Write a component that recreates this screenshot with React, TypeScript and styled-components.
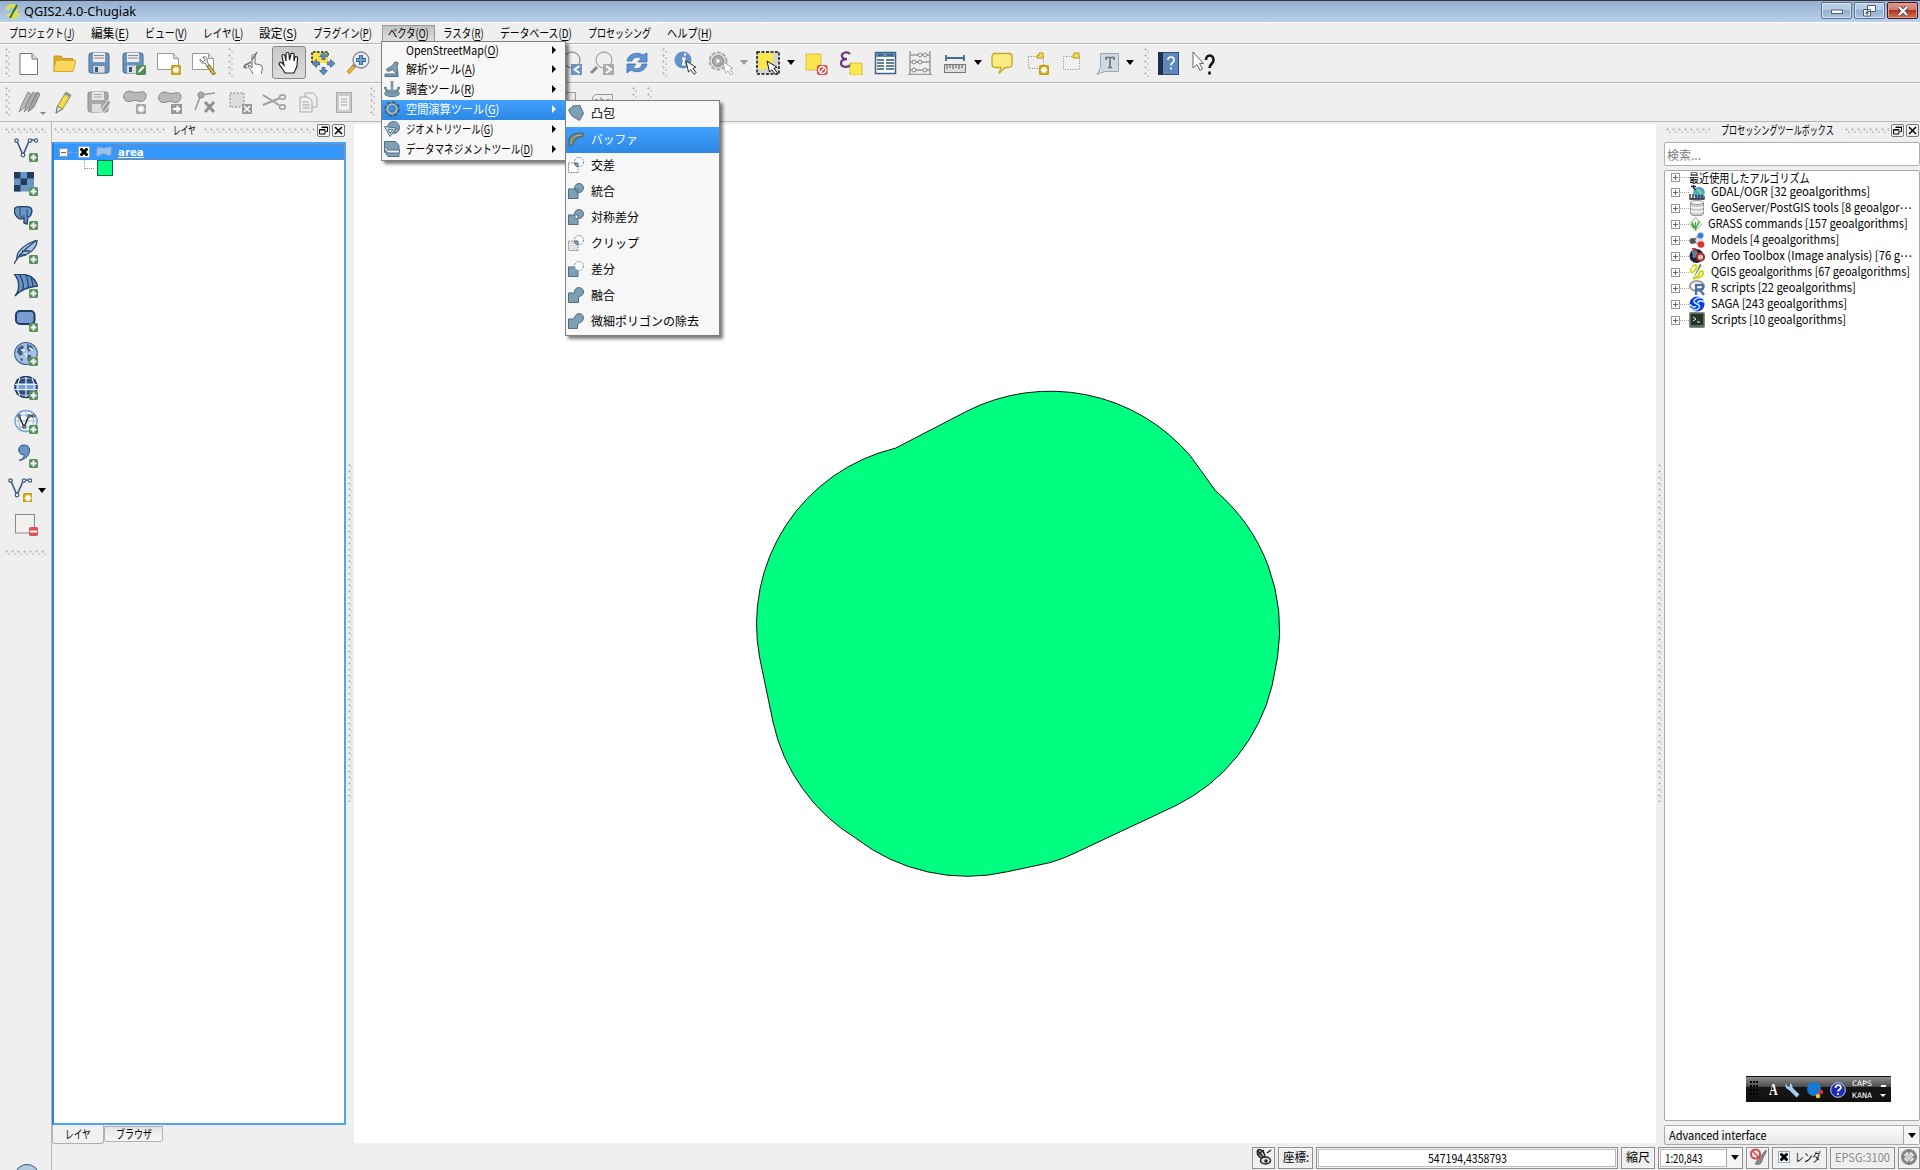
import React, { useLayoutEffect, useRef, useState } from 'react';
import styled, { createGlobalStyle, css } from 'styled-components';

const Global = createGlobalStyle`
  *, *::before, *::after { box-sizing: border-box; }
  body { margin: 0; background: #efefef; overflow: hidden; }
  svg { display: block; flex: none; }
  u { text-underline-offset: 2px; }
`;

const gothic = `"Noto Sans CJK JP", "Noto Sans", sans-serif`;

/* ---------- text fitted to the narrow UI font's advance ---------- */
const FitBox = styled.span<{ $w: number }>`
  display: inline-block;
  flex: none;
  width: ${p => p.$w}px;
  white-space: nowrap;
`;
const FitInner = styled.span`
  display: inline-block;
  transform-origin: 0 50%;
`;
function Fit({ w, children }: { w: number; children: React.ReactNode }) {
  const ref = useRef<HTMLSpanElement>(null);
  const [scale, setScale] = useState(1);
  useLayoutEffect(() => {
    if (ref.current) setScale(w / ref.current.offsetWidth);
  }, [w]);
  return (
    <FitBox $w={w}>
      <FitInner ref={ref} style={{ transform: `scaleX(${scale})` }}>{children}</FitInner>
    </FitBox>
  );
}
const Accel = ({ text, k }: { text: string; k?: string }) => (
  <>{text}{k && <>(<u>{k}</u>)</>}</>
);

/* ---------- icons ---------- */
const Svg = ({ s = 24, children }: { s?: number; children: React.ReactNode }) => (
  <svg width={s} height={s} viewBox={`0 0 ${s} ${s}`} fill="none">{children}</svg>
);
const Plus = () => (
  <g><rect x="15" y="15" width="9" height="9" rx="1.500" fill="#5a9158" /><path d="M19.500 16.500v6M16.500 19.500h6" stroke="#fff" strokeWidth="2" /></g>
);
const Star = ({ x = 14, y = 14, c = '#c9a00c' }: { x?: number; y?: number; c?: string }) => (
  <g transform={`translate(${x} ${y})`}><rect width="10" height="10" rx="1.500" fill={c} /><path d="M5 1.500v7M1.500 5h7M2.500 2.500l5 5M7.500 2.500l-5 5" stroke="#fff" strokeWidth="1.300" /></g>
);
const Cursor = ({ x, y, c = '#333' }: { x: number; y: number; c?: string }) => (
  <path transform={`translate(${x} ${y})`} d="M0 0l2.500 11 2.300-2.200 3.400 4.400 2-1.500-3.300-4.300 3-1.200z" fill="#fff" stroke={c} strokeWidth="1" />
);

const icons: Record<string, React.ReactNode> = {
  file: <Svg><path d="M3 2.500h12l5.500 5.500v15.500H3z" fill="#fff" stroke="#777" /><path d="M15 2.500v5.500h5.500" fill="#ddd" stroke="#777" /></Svg>,
  folder: <Svg><path d="M2 20V5h7l2 2.500h10V10" fill="#d9a92f" stroke="#c89a2a" /><path d="M1.500 20.500L4 9.500h20l-3 11z" fill="#fbd75f" stroke="#d9a92f" /></Svg>,
  save: <Svg><rect x="2" y="2" width="20" height="20" rx="2" fill="#6a93c3" stroke="#44678f" /><path d="M6 2h12v9H6z" fill="#eee" /><path d="M7 4.500h10M7 7h10" stroke="#888" /><path d="M6 14.500h12V22H6z" fill="#ddd" stroke="#44678f" strokeWidth=".6" /><rect x="8" y="16" width="3" height="5" fill="#35557c" /></Svg>,
  saveas: <Svg><rect x="1" y="2" width="20" height="20" rx="2" fill="#6a93c3" stroke="#44678f" /><path d="M5 2h12v9H5z" fill="#eee" /><path d="M6 4.500h10M6 7h10" stroke="#888" /><path d="M5 14.500h11V22H5z" fill="#ddd" /><rect x="7" y="16" width="3" height="5" fill="#35557c" /><rect x="14" y="14" width="10" height="10" rx="1.500" fill="#4f8e50" /><path d="M16 22l1-3 4-4 1.500 1.500-4 4z" fill="#fff" /></Svg>,
  composer: <Svg><path d="M.5 2.500h16l5 5V18.500H.5z" fill="#fff" stroke="#999" /><path d="M16.500 2.500v5h5" fill="#ddd" stroke="#999" /><Star /></Svg>,
  manager: <Svg><path d="M.5 2.500h16l5 5V18.500H.5z" fill="#fff" stroke="#999" /><path d="M16.500 2.500v5h5" fill="#ddd" stroke="#999" /><path d="M8 8c0 4 3 5 5 4l3 5 2-1-3-6c1-3-1-5-4-4l2 3-2 2z" fill="#ececec" stroke="#777" /><path d="M15 15.500l2.500-1.500 6 8.500-2.500 1.500z" fill="#d7b952" stroke="#7b6428" /></Svg>,
  touch: <Svg><path d="M11 23c-1-3-4-6-5-8 1-1 3 0 4 2V5c0-2 3-2 3 0v8c3 0 6 1 7 2 1 2 0 5-1 8" fill="#fff" stroke="#666" /><path d="M2 15l7-4M10 9l5-8M4 13l-2 3 3 1" stroke="#777" strokeWidth="1.500" /></Svg>,
  hand: <Svg><path d="M8 22c-2-4-5-7-6-9 0-2 2-2 3-1l2 2-2-9c0-2 2-2 3 0l1 5V3c0-2 3-2 3 0l.5 6L14 3c0-1 3-1 3 0v7l1-4c1-1 3 0 2.500 1.500L20 15c-1 3-2 4-3 7z" fill="#fff" stroke="#222" strokeWidth="1.200" /></Svg>,
  pansel: <Svg><path d="M1 1h16v11H1z" fill="#f7e04a" /><path d="M1 12V1h16v5" stroke="#222" strokeWidth="1.500" strokeDasharray="2.500 1.500" /><path d="M12.500 1l4 4.500h-2.500v3h-3v-3H8.500zM12.500 24l4-4.500h-2.500v-3h-3v3H8.500zM1 12.500l4.500-4v2.500h3v3h-3v2.500zM24 12.500l-4.500-4v2.500h-3v3h3v2.500z" fill="#5a8dc6" stroke="#2f5687" strokeWidth=".7" /></Svg>,
  zoomin: <Svg><path d="M2 22l7-8" stroke="#777" strokeWidth="4" /><path d="M2 22l6-6.500" stroke="#f3b61f" strokeWidth="3" /><circle cx="15" cy="9" r="8" fill="#e8eef5" stroke="#888" strokeWidth="1.300" /><path d="M15 4v10M10 9h10" stroke="#35629a" strokeWidth="4" /><path d="M15 4.500v9M10.500 9h9" stroke="#6f9fd3" strokeWidth="2" /></Svg>,
  zoomlast: <Svg><circle cx="12" cy="9" r="8" fill="#eee" stroke="#999" strokeWidth="1.300" /><rect x="11" y="13" width="11" height="11" fill="#6a93c3" /><path d="M19.500 15l-5 3.500 5 3.500" stroke="#fff" strokeWidth="2" /></Svg>,
  zoomnext: <Svg><path d="M1 22l6-6" stroke="#888" strokeWidth="3" /><circle cx="14" cy="9" r="8" fill="#eee" stroke="#aaa" strokeWidth="1.300" /><rect x="13" y="13" width="11" height="11" fill="#aaa" /><path d="M16 15l5 3.500-5 3.500" stroke="#fff" strokeWidth="2" /></Svg>,
  refresh: <Svg><path d="M2 10C3 3 12 0 18 4l4-2v9h-9l3-3.500C13 5 8 6 7 10zM22 13c-1 7-10 10-16 6l-4 3v-9h9l-3 3.500c3 2.500 8 1.500 9-3.500z" fill="#5f93d0" stroke="#2f65a5" strokeWidth=".7" /></Svg>,
  identify: <Svg><circle cx="9" cy="9" r="8.500" fill="#6491c6" /><path d="M10 3.500h2M8 7.500h2.500L9 13.500h2.500" stroke="#fff" strokeWidth="2" /><Cursor x={12} y={10} /></Svg>,
  action: <Svg><circle cx="9" cy="10" r="8.500" fill="#ddd" stroke="#aaa" strokeWidth="2" strokeDasharray="4 1.500" /><circle cx="9" cy="10" r="5.500" fill="#aaa" stroke="#888" /><path d="M7.500 7.500l4 2.500-4 2.500z" fill="#fff" /><Cursor x={14} y={11} c="#aaa" /></Svg>,
  select: <Svg><path d="M1 1h22v22H1z" fill="#d4d4d4" stroke="#111" strokeWidth="1.500" strokeDasharray="3 1.500" /><path d="M2 2h15v16H2z" fill="#fbe650" /><Cursor x={11} y={10} c="#111" /></Svg>,
  deselect: <Svg><rect x="2" y="3" width="15" height="16" fill="#fbe650" stroke="#c4a40d" strokeDasharray="1.500 1" /><rect x="13" y="14" width="10.500" height="10" rx="2" fill="#dc4141" /><circle cx="18.300" cy="19" r="3.500" stroke="#fff" strokeWidth="1.500" /><path d="M16.200 21.500l4.500-5" stroke="#fff" strokeWidth="1.300" /></Svg>,
  epsilon: <Svg><path d="M11 3C8 0 2 2 3 5c0 2 2 3 5 3-4 0-6 2-6 4 0 5 8 5 10 1" stroke="#6d3b7a" strokeWidth="2.300" /><rect x="11" y="12" width="12" height="12" fill="#fbe650" stroke="#c4a40d" strokeDasharray="1.500 1" /></Svg>,
  table: <Svg><rect x="2.500" y="1.500" width="20" height="21" fill="#fff" stroke="#3c6285" strokeWidth="1.500" /><path d="M3 2h19v4H3z" fill="#5f8cb5" /><path d="M4 9h7M4 12h7M4 15h7M4 18h7M13 9h8M13 12h8M13 15h8M13 18h8M5 4h5M14 4h6" stroke="#315778" strokeWidth="1.300" /></Svg>,
  abacus: <Svg><path d="M2 0v23M22 0v23M2 4h20M2 11h20M2 19h20M0 23.500h24" stroke="#999" strokeWidth="1.400" /><g fill="#eee" stroke="#888"><circle cx="12" cy="4" r="2" /><circle cx="17" cy="4" r="2" /><circle cx="6" cy="11" r="2" /><circle cx="12" cy="11" r="2" /><circle cx="6" cy="19" r="2" /><circle cx="17" cy="19" r="2" /></g></Svg>,
  ruler: <Svg><path d="M3 7h18M3 4v6M21 4v6" stroke="#3f6b96" strokeWidth="1.800" /><rect x="1.500" y="13.500" width="21" height="8" fill="#ddd" stroke="#777" /><path d="M4 14v4M7 14v3M10 14v4M13 14v3M16 14v4M19 14v3" stroke="#555" /></Svg>,
  bubble: <Svg><path d="M5 2.500h14c3 0 3 2 3 3v7c0 3-1 4-4 4h-3l-6 6 2-6H6c-3 0-4-1-4-4V6c0-2 1-3.500 3-3.500z" fill="#fcec86" stroke="#c9a61e" strokeWidth="1.300" /></Svg>,
  newmark: <Svg><path d="M1.500 5.500h15v12h-15z" stroke="#888" strokeDasharray="1 1.500" /><path d="M12 2h4v5h-6V4.500h2z" fill="#f9e152" stroke="#b8960c" /><Star x={12} y={14} /></Svg>,
  showmark: <Svg><path d="M3.500 5.500h16v13h-16z" stroke="#888" strokeDasharray="1 1.500" fill="#f1f1f1" /><path d="M14 2h5v5h-6V4.500h1z" fill="#f9e152" stroke="#b8960c" /></Svg>,
  annot: <Svg><path d="M4.500 2.500h18v18H9l-8 3 3.500-7z" fill="#cfdbe4" stroke="#9ba8b0" /><path d="M10 9V6.500h8V9M14 7v9M12 16.500h4" stroke="#6c7378" strokeWidth="1.600" /></Svg>,
  help: <Svg><rect x="2.500" y="1.500" width="20" height="22" fill="#5f89bd" stroke="#2e4f7b" /><rect x="2" y="1" width="5" height="23" fill="#1f3048" /><path d="M12 9c0-4 6-4 6 0 0 3-3 2.500-3 5.500M15 16.500v2" stroke="#fff" strokeWidth="1.700" /></Svg>,
  whats: <Svg><path d="M1 1v16l4-3.500 3 6 2.500-1.500-3-5.500h4z" fill="#fff" stroke="#666" /><path d="M14 9c0-6 7.500-6 7.500 0 0 4-4 4-4 8M17.500 20.500v3" stroke="#111" strokeWidth="2.600" /></Svg>,
  pencils: <Svg><path d="M1 22l3-8L10 2l3 2-6 13z" fill="#bbb" stroke="#8c8c8c" /><path d="M6 22l3-8 6-12 3 2-6 13z" fill="#b0b0b0" stroke="#8c8c8c" /><path d="M10 22l3-8 6-12 3 2-6 13z" fill="#a4a4a4" stroke="#858585" /></Svg>,
  pencil: <Svg><path d="M5 23l1.500-7L15 2l5 3-8.500 14z" fill="#f0dc4c" stroke="#9c8c2a" /><path d="M5 23l1.500-7 5 3z" fill="#ddd" stroke="#777" /><path d="M15 2l5 3-1.500 2.500-5-3z" fill="#999" /></Svg>,
  saveedit: <Svg><rect x="1" y="2" width="20" height="20" rx="2" fill="#a8a8a8" stroke="#8c8c8c" /><path d="M5 2h12v8H5z" fill="#e6e6e6" /><path d="M7 4.500h8M7 7h8" stroke="#aaa" /><path d="M5 14h9v8H5z" fill="#ddd" /><path d="M14 23l1-4 6-9 3 2-6 9z" fill="#999" stroke="#eee" /></Svg>,
  addfeat: <Svg><path d="M2.500 2.500C7-1 10 3 14 2.500c5-1 9-1.500 9 3 0 5-4 7-8 5.500-4-2-8 2-12 0-3-2-3-6-.5-8.500z" fill="#b8b8b8" stroke="#888" /><Star x={13} y={14} c="#a5a5a5" /></Svg>,
  movefeat: <Svg><path d="M2.500 3.500C7 0 10 4 14 3.500c5-1 9-1.500 9 3 0 5-4 7-8 5.500-4-2-8 2-12 0-3-2-3-6-.5-8.500z" fill="#b8b8b8" stroke="#888" /><rect x="13" y="14" width="11" height="10" fill="#999" /><path d="M15 19h6M18.500 16l3 3-3 3" stroke="#fff" strokeWidth="1.800" /></Svg>,
  node: <Svg><path d="M2 20L8 5l14-2" stroke="#999" strokeWidth="1.500" /><circle cx="8" cy="5" r="3" fill="#aaa" stroke="#888" /><path d="M12 22l9-10M12 12l9 10" stroke="#909090" strokeWidth="3" /></Svg>,
  delsel: <Svg><rect x="2" y="3" width="14" height="14" fill="#ddd" stroke="#888" strokeDasharray="2 1.500" /><rect x="14" y="14" width="10" height="10" fill="#999" /><path d="M16 16l6 6M22 16l-6 6" stroke="#fff" strokeWidth="1.600" /></Svg>,
  cut: <Svg><path d="M1 5l16 10M1 15l17-7" stroke="#a0a0a0" strokeWidth="2" /><ellipse cx="20.500" cy="7" rx="3" ry="2.300" stroke="#999" strokeWidth="1.500" /><ellipse cx="20.500" cy="17" rx="3" ry="2.300" stroke="#999" strokeWidth="1.500" /></Svg>,
  copy: <Svg><path d="M9 3h8l4 4v10H9z" fill="#eee" stroke="#aaa" /><path d="M4 7h8l4 4v11H4z" fill="#eee" stroke="#aaa" /><path d="M6.500 12h6M6.500 15h7M6.500 18h7" stroke="#bbb" strokeWidth="1.500" /></Svg>,
  paste: <Svg><rect x="4.500" y="2.500" width="15" height="20" fill="#ccc" stroke="#aaa" /><path d="M7 6h10v14H7z" fill="#f2f2f2" /><path d="M9 9h6M9 12h6M9 15h6M8 3h8" stroke="#bbb" strokeWidth="1.500" /></Svg>,
  label: <Svg><path d="M2.500 6.500l4-4h15v14h-19z" fill="#e8e8e8" stroke="#999" /></Svg>,
  vector: <Svg><path d="M2.500 2L9 17 15.500 2H22" stroke="#466084" strokeWidth="1.700" /><g fill="#fff" stroke="#466084" strokeWidth="1.300"><circle cx="2.500" cy="2.500" r="1.700" /><circle cx="9" cy="17" r="1.800" /><circle cx="16" cy="2.500" r="1.700" /><circle cx="22" cy="2.500" r="1.700" /></g><Plus /></Svg>,
  raster: <Svg><path d="M0 0h20v19.500H0z" fill="#6b95c7" /><path d="M0 0h6.500v6.500H0zM13 0h7v6.500h-7zM6.500 6.500H13V13H6.500zM0 13h6.500v6.500H0z" fill="#223c5e" /><Plus /></Svg>,
  elephant: <Svg><path d="M1 2c3-2 13-2 16 0 2 3 0 9-3 9l-1 7-3-1V12c-3 2-6 0-7-1C1 9-.5 5 1 2z" fill="#6b95c7" stroke="#24456e" strokeWidth="1.400" /><path d="M6 2v8c1 2 4 1 4-1M13 3v8" stroke="#24456e" /><Plus /></Svg>,
  feather: <Svg><path d="M3 20C1 9 15 3 23 0c0 8-7 14-18 17" fill="#a9c4e2" stroke="#2b4b73" strokeWidth="1.200" /><path d="M0 24C4 15 12 8 23 0M5 15l7 0M8 11l8 0" stroke="#2b4b73" strokeWidth="1.300" /><Plus /></Svg>,
  wing: <Svg><path d="M0 0c10 0 20 0 23.500 12C14 13 6 16 1 22 6 16 6 6 0 0z" fill="#6b95c7" stroke="#24456e" strokeWidth="1.400" /><path d="M6 1c3 6 4 10 3 15M12 1c2 6 3 9 2 13M17 4c2 4 2 6 2 9" stroke="#24456e" strokeWidth="1.300" /><Plus /></Svg>,
  oracle: <Svg><rect x="2" y="3" width="18.500" height="13" rx="4" fill="#7a9cd0" stroke="#213c62" strokeWidth="2" /><Plus /></Svg>,
  globe: <Svg><ellipse cx="12" cy="11.500" rx="11.300" ry="11" fill="#a5c1e2" stroke="#45699a" strokeWidth="1.200" /><path d="M4 6l4-3 2 2-2 4 1 3-3 2-3-4zM13 2l5 2 2 4-3 0-2 2-2-3zM13 13l4 0 0 4-3 3zM6 16l3 1-1 3z" fill="#3d608c" /><path d="M7 8l4 0M15 6l4 2M11 11l2 4" stroke="#eef4fa" strokeWidth="1.500" /><Plus /></Svg>,
  globe2: <Svg><ellipse cx="12" cy="11" rx="11" ry="10.500" fill="#7da3d3" stroke="#1f3b61" strokeWidth="1.500" /><path d="M2.500 5h19M2.500 16.500h19" stroke="#1f3b61" strokeWidth="4" opacity=".8" /><path d="M12 1v20M1 8.500h22M1 13.500h22M6 2c-3 6-3 12 0 18M18 2c3 6 3 12 0 18" stroke="#e5edf6" strokeWidth="1.200" /><Plus /></Svg>,
  globev: <Svg><ellipse cx="12" cy="11" rx="11" ry="10.500" fill="#f5f9ff" stroke="#7ba1d3" strokeWidth="1.500" /><path d="M1 11h22M12 1v20M3 5h18M3 17h18M7 2c-3 6-3 12 0 18M17 2c3 6 3 12 0 18" stroke="#9bbbe0" /><path d="M5 6l5 11 5-11h5" stroke="#222" strokeWidth="1.400" /><g fill="#fff" stroke="#222"><circle cx="5" cy="6" r="1.300" /><circle cx="10" cy="17" r="1.300" /><circle cx="15" cy="6" r="1.300" /><circle cx="19.500" cy="6" r="1.300" /></g><Plus /></Svg>,
  comma: <Svg><path d="M5 16.500c4-1.500 5.500-4 5-6-6 1.500-8-9.500 0-9.500 9 0 7 14-5 15.500z" fill="#6b95c7" stroke="#2b4f80" /><Plus /></Svg>,
  newvec: <Svg><path d="M2.500 2L9 17 15.500 2H22" stroke="#466084" strokeWidth="1.700" /><g fill="#fff" stroke="#466084" strokeWidth="1.300"><circle cx="2.500" cy="2.500" r="1.700" /><circle cx="9" cy="17" r="1.800" /><circle cx="16" cy="2.500" r="1.700" /><circle cx="22" cy="2.500" r="1.700" /></g><Star x={15} y={15} /></Svg>,
  remove: <Svg><rect x="1.500" y="2.500" width="19" height="18.500" fill="#f1f1ef" stroke="#8a8a86" /><rect x="15" y="15" width="9" height="9" rx="1.500" fill="#e25258" /><path d="M16 19.500h7" stroke="#fff" strokeWidth="2" /></Svg>,
};

const B = '#7f9fb3', BD = '#4f6f86';
const lens = 'M6.500 6H10v3.800C7.500 9.500 6.500 8 6.500 6z';
const menuIcons: Record<string, React.ReactNode> = {
  scope: <Svg s={16}><path d="M1 13h13v2.500H1zM2 8.500l6-3.500 3-4 3 .5-1 5 1 6-3-1-2-3-5 2z" fill={B} stroke={BD} /></Svg>,
  survey: <Svg s={16}><ellipse cx="8" cy="12.500" rx="7.500" ry="3" fill={B} stroke={BD} /><path d="M8 0v10M1 6c1 4 4 5 7 5s6-1 7-5" stroke={BD} strokeWidth="2.500" /><path d="M8 0v10M2 7c1 3 3 4 6 4s5-1 6-4" stroke="#a9bfce" strokeWidth="1" /></Svg>,
  gear: <Svg s={16}><circle cx="8" cy="8" r="6.700" stroke="#44627a" strokeWidth="2.500" strokeDasharray="3.200 2.060" /><circle cx="8" cy="8" r="4.600" stroke="#44627a" strokeWidth="4" /><circle cx="8" cy="8" r="4.600" stroke="#9db6c8" strokeWidth="2.400" /></Svg>,
  geom: <Svg s={16}><circle cx="9.500" cy="6.500" r="6" fill={B} stroke={BD} /><path d="M.5 5.500L12 7l-6 8.500z" fill="#e4ecf1" stroke={BD} /><path d="M4 8l5 .5-3 4z" stroke={BD} /></Svg>,
  data: <Svg s={16}><path d="M.5.500h11l3.500 4v11H4L.5 11z" fill={B} stroke={BD} /><path d="M.5 5L4 9h11.500v3H4L.5 8z" fill="#edf2f5" stroke={BD} /></Svg>,
  hull: <Svg s={16}><path d="M.5 5L5 1l7-.5 3.500 8-4 7L4 11z" fill={B} stroke={BD} /></Svg>,
  buffer: <Svg s={16}><path d="M1 14C0 5 4 2 14 2c2 0 2 3 0 4-5 0-8 3-9 8-1 1-4 2-4 0z" fill="#6f8478" stroke="#425f66" /><path d="M3 13c0-6 3-9 11-9" stroke="#b6b58d" /></Svg>,
  intersect: <Svg s={16}><rect x=".5" y="6" width="9.500" height="9.500" fill="#fff" stroke="#777" strokeDasharray="1.500 1" /><circle cx="11" cy="5" r="4.500" fill="#fff" stroke="#6f8c9c" strokeDasharray="2 1" /><path d={lens} fill={B} stroke={BD} /></Svg>,
  union: <Svg s={16}><rect x=".5" y="6" width="9.500" height="9.500" fill={B} stroke={BD} /><circle cx="11" cy="5" r="4.500" fill={B} stroke={BD} /><path d="M6.500 6H10v3.800" stroke={BD} /></Svg>,
  sym: <Svg s={16}><rect x=".5" y="6" width="9.500" height="9.500" fill={B} stroke={BD} /><circle cx="11" cy="5" r="4.500" fill={B} stroke={BD} /><path d={lens} fill="#fff" stroke={BD} /></Svg>,
  clip: <Svg s={16}><rect x=".5" y="6" width="9.500" height="9.500" fill="#e2e2e2" stroke="#888" strokeDasharray="1.500 1" /><circle cx="11" cy="5" r="4.500" fill="#fff" stroke="#6f8c9c" strokeDasharray="2 1" /><path d={lens} fill={B} stroke={BD} /></Svg>,
  diff: <Svg s={16}><rect x=".5" y="6" width="9.500" height="9.500" fill={B} stroke={BD} /><circle cx="11" cy="5" r="4.500" fill="#fff" stroke="#6f8c9c" strokeDasharray="2 1" /></Svg>,
  dissolve: <Svg s={16}><path d="M.5 6h6c-1-7 9-7 9-1 0 3-3 4.500-5 4.500v6H.5z" fill={B} stroke={BD} /></Svg>,
  sliver: <Svg s={16}><path d="M.5 6h4l2.500-2c1-5 8.500-4.500 8.500 1 0 3-3 5-5 5l-1 3v2.500H.5z" fill={B} stroke={BD} /></Svg>,
};

const treeIcons: Record<string, React.ReactNode> = {
  gdal: <Svg s={16}><circle cx="10" cy="8.500" r="5.800" fill="#4ba7c2" /><path d="M7 5l4 1 3 4-4-1z" fill="#8ed08e" /><path d="M2 2.500h5M4.500 1v3l2 2" stroke="#222" strokeWidth="1.300" /><path d="M1 10v5h14v-3M4 10v5M7 11v4M10 11v4M13 11v4" stroke="#223" strokeWidth="1.300" /></Svg>,
  db: <Svg s={16}><path d="M1.500 2.500v11c0 3 13 3 13 0v-11z" fill="#ccc" stroke="#888" /><ellipse cx="8" cy="2.500" rx="6.500" ry="2" fill="#f4f4f4" stroke="#999" /><path d="M1.500 6.500c1 2 12 2 13 0M1.500 10.500c1 2 12 2 13 0" stroke="#fff" strokeWidth="1.400" /></Svg>,
  grass: <Svg s={16}><path d="M6.500 1l6 7-6 7-6-7z" fill="#eef8ea" stroke="#a7b7a2" /><path d="M6.500 14V6M6.500 13L3 6M6.500 13l4-8M5 12L2.500 8" stroke="#49a545" strokeWidth="1.300" /></Svg>,
  models: <Svg s={16}><path d="M3 10l7-6M4 9l8 3" stroke="#555" strokeWidth="2" /><circle cx="3.500" cy="9" r="3" fill="#555" /><circle cx="10" cy="8" r="3.500" fill="#ddd" /><circle cx="11.500" cy="3.500" r="3" fill="#3a7ce8" /><circle cx="12" cy="12.500" r="3.300" fill="#e13232" /></Svg>,
  orfeo: <Svg s={16}><circle cx="7.500" cy="8" r="7" fill="#1d2438" /><path d="M3 3c3-2 5 0 6 2s-2 5-5 5z" fill="#6a7c9c" /><circle cx="11.500" cy="9" r="3.600" fill="#bcc" stroke="#c2211b" strokeWidth="2" /><path d="M3 0l5 2" stroke="#b33" strokeWidth="2" /></Svg>,
  qgis: <Svg s={16}><path d="M3 3C7-1 9 2 6 6S1 9 2 4M5 14c5 1 4-6 7-7s3 5-1 6-8 2-6 1z" stroke="#d4d320" strokeWidth="2" /><path d="M4 15L11 0l1.500 1z" fill="#327c28" /></Svg>,
  r: <Svg s={16}><ellipse cx="8" cy="6" rx="7" ry="5" stroke="#999" strokeWidth="2" /><path d="M7 15V5h5c3 0 3 4 0 4.500H8M11 10l4 5" stroke="#4c6fa8" strokeWidth="2.300" /></Svg>,
  saga: <Svg s={16}><circle cx="8" cy="8" r="7.500" fill="#1133e8" /><path d="M13 2C7 1 3 5 6 7s6 2 4 5-7 2-8 0M15 6c-4-2-8-1-5 1M1 8c1 3 5 4 6 2" stroke="#a9f0ff" strokeWidth="1.600" /></Svg>,
  script: <Svg s={16}><rect x=".5" y=".5" width="15" height="15" rx="1" fill="#666" stroke="#888" /><rect x="2" y="2" width="12" height="11" fill="#233524" /><path d="M4 5l3 2-3 2M8 10h3" stroke="#dfe" /></Svg>,
};

/* ---------- frame ---------- */
const Window = styled.div`
  position: relative;
  width: 1920px;
  height: 1170px;
  display: flex;
  flex-direction: column;
  overflow: hidden;
  background: #efefef;
  color: #000;
  font: 12px/16px ${gothic};
`;
const TitleBar = styled.header`
  flex: none;
  height: 22px;
  display: flex;
  align-items: flex-start;
  gap: 2px;
  padding: 1px 2px 0 5px;
  border-top: 1px solid #35353b;
  background: linear-gradient(#95b0d0, #b9d1ea);
  > svg { margin: 2px 2px 0 0; }
`;
const TitleText = styled.h1`
  margin: 1px 0 0;
  flex: 1;
  font: 400 12.5px/18px "Noto Sans", sans-serif;
`;
const WinButton = styled.button<{ $close?: boolean }>`
  flex: none;
  width: 31px;
  height: 17px;
  padding: 0;
  display: flex;
  align-items: center;
  justify-content: center;
  border: 1px solid ${p => (p.$close ? '#4a1520' : '#5b718e')};
  border-radius: 2px;
  box-shadow: inset 0 0 0 1px ${p => (p.$close ? '#e39c90' : '#d4e2f1')};
  background: ${p => p.$close
    ? 'linear-gradient(#dd9a8c, #cf7866 50%, #b2361f 50%, #cf7358)'
    : 'linear-gradient(#c0d3e8, #b0c8e2 50%, #93afcf 50%, #aac5e1)'};
`;
const MenuBar = styled.nav`
  flex: none;
  height: 22px;
  display: flex;
  align-items: center;
  padding-left: 1px;
  border-top: 1px solid #fff;
  border-bottom: 1px solid #b7b7b7;
`;
const MenuTitle = styled.div<{ $open?: boolean }>`
  height: 17px;
  padding: 0 8px 1px;
  display: flex;
  align-items: center;
  ${p => p.$open && css`
    padding: 0 5px 1px;
    margin: 0 0 0 2px;
    border: 1px solid #999;
    background: linear-gradient(#c2c2c2, #dedede);
  `}
`;
const ToolBar = styled.div`
  flex: none;
  height: 39px;
  display: flex;
  align-items: center;
  padding: 0 0 2px 5px;
  border-top: 1px solid #fafafa;
  border-bottom: 1px solid #b7b7b7;
`;
const Slot = styled.div<{ $w: number }>`
  flex: none;
  width: ${p => p.$w}px;
  display: flex;
  align-items: center;
  justify-content: center;
`;
const dots = css`
  background-image:
    radial-gradient(circle at 1.500px 1.500px, #c3c3c3 1px, transparent 1.400px),
    radial-gradient(circle at 4px 4px, #d0d0d0 1px, transparent 1.400px);
  background-size: 6px 6px;
`;
const Grip = styled.i`
  flex: none;
  width: 6px;
  height: 30px;
  ${dots}
`;
const HGrip = styled.i<{ $w?: number }>`
  height: 5px;
  ${p => (p.$w ? `width: ${p.$w}px; flex: none;` : 'flex: 1;')}
  ${dots}
`;
const Down = styled.i<{ $c?: string; $s?: number }>`
  flex: none;
  border: ${p => p.$s ?? 4}px solid transparent;
  border-top: ${p => (p.$s ?? 4) + (p.$s ? 0 : 1)}px solid ${p => p.$c ?? '#000'};
  border-bottom: 0;
`;
const Pressed = styled.div`
  flex: none;
  width: 34px;
  height: 33px;
  display: flex;
  align-items: center;
  justify-content: center;
  border: 1px solid #888;
  border-radius: 3px;
  background: linear-gradient(#c8c8c8, #dcdcdc);
`;
const Body = styled.main`
  flex: 1;
  min-height: 0;
  display: flex;
`;
const SideTools = styled.aside`
  width: 52px;
  flex: none;
  display: flex;
  flex-direction: column;
  align-items: center;
  padding-top: 6px;
  border-right: 1px solid #b7b7b7;
`;
const SideSlot = styled.div<{ $menu?: boolean }>`
  width: 100%;
  height: 34px;
  flex: none;
  display: flex;
  align-items: center;
  gap: 6px;
  padding-left: ${p => (p.$menu ? 8 : 14)}px;
`;
const SideEnd = styled.div`
  margin-top: 9px;
`;

/* ---------- docks ---------- */
const Dock = styled.section<{ $w: number }>`
  width: ${p => p.$w}px;
  flex: none;
  display: flex;
  flex-direction: column;
`;
const DockTitle = styled.div<{ $gap: number }>`
  height: 20px;
  flex: none;
  display: flex;
  align-items: center;
  padding: 0 1px 4px 2px;
  > span { margin: 0 ${p => p.$gap}px; }
`;
const DockButton = styled.button`
  flex: none;
  width: 13px;
  height: 13px;
  margin-left: 2px;
  padding: 0;
  display: flex;
  align-items: center;
  justify-content: center;
  background: #f3f3f3;
  border: 1px solid #777;
  border-radius: 2px;
`;
const DockButtons = () => (
  <>
    <DockButton><svg width="9" height="9" fill="none" stroke="#000"><path d="M3 2V1h5.500v4.500H7M3 1.500h5.500M.5 3.500h5.500v4.500H.5zM.5 4h5" /></svg></DockButton>
    <DockButton><svg width="9" height="9" stroke="#000" strokeWidth="1.500"><path d="M1 1l7 7M8 1l-7 7" /></svg></DockButton>
  </>
);
const LayerTree = styled.div`
  flex: 1;
  border: 2px solid #4ea3fb;
  border-left-color: #2a7fe0;
  background: #fff;
`;
const LayerRow = styled.div`
  height: 16px;
  display: flex;
  align-items: center;
  padding-left: 5px;
  background: #3498fe;
`;
const Expander = styled.i<{ $plus?: boolean }>`
  position: relative;
  flex: none;
  width: 9px;
  height: 9px;
  background: #fff;
  border: 1px solid #999;
  &::before { content: ''; position: absolute; left: 1px; top: 3px; width: 5px; height: 1px; background: #666; }
  ${p => p.$plus && css`&::after { content: ''; position: absolute; left: 3px; top: 1px; width: 1px; height: 5px; background: #666; }`}
`;
const Stub = styled.i<{ $w: number }>`
  flex: none;
  width: ${p => p.$w}px;
  border-top: 1px dotted #aaa;
`;
const Check = styled.i`
  flex: none;
  width: 12px;
  height: 12px;
  display: flex;
  align-items: center;
  justify-content: center;
  background: #fff;
  border: 1px solid #9ab;
`;
const CheckMark = () => <Check><svg width="8" height="8" stroke="#000" strokeWidth="3"><path d="M.5.500l7 7M7.500.500l-7 7" /></svg></Check>;
const LayerName = styled.span`
  flex: 1;
  height: 16px;
  padding-left: 2px;
  margin-left: 3px;
  border: 1px dotted #b47a4a;
  color: #fff;
  font: bold 11px/15px "DejaVu Sans", sans-serif;
  u { text-underline-offset: 1px; }
`;
const Legend = styled.div`
  display: flex;
  padding-left: 30px;
`;
const Elbow = styled.i`
  width: 10px;
  height: 9px;
  margin-right: 3px;
  border-left: 1px dotted #999;
  border-bottom: 1px dotted #999;
`;
const Swatch = styled.i`
  width: 16px;
  height: 16px;
  background: #00ff80;
  border: 1px solid #0a6b3c;
`;
const Tabs = styled.div`
  height: 45px;
  flex: none;
  display: flex;
  align-items: flex-start;
`;
const Tab = styled.div<{ $w: number; $on?: boolean }>`
  width: ${p => p.$w}px;
  height: ${p => (p.$on ? 19 : 16)}px;
  margin-top: ${p => (p.$on ? 0 : 1)}px;
  display: flex;
  align-items: center;
  justify-content: center;
  border: 1px solid #b0b0b0;
  border-top: ${p => (p.$on ? 0 : 1)}px solid #b0b0b0;
  border-radius: 0 0 3px 3px;
  background: ${p => (p.$on ? '#f1f1f1' : 'linear-gradient(#e4e4e4, #f8f8f8)')};
`;
const Splitter = styled.div`
  width: 8px;
  flex: none;
  display: flex;
  align-items: center;
  justify-content: center;
`;
const VGrip = styled.i`
  width: 4px;
  height: 338px;
  margin-bottom: 26px;
  ${dots}
`;
const Canvas = styled.div`
  flex: 1;
  height: 1019px;
  margin-top: 2px;
  background: #fff;
`;
const Search = styled.div`
  height: 24px;
  flex: none;
  padding: 4px 2px;
  color: #808080;
  background: #fff;
  border: 1px solid #b0b0b0;
  border-radius: 2px;
`;
const AlgoTree = styled.div`
  flex: 1;
  margin: 4px 0;
  padding: 0 0 0 6px;
  background: #fff;
  border: 1px solid #aaa;
  border-radius: 2px;
`;
const AlgoRow = styled.div<{ $first?: boolean }>`
  height: ${p => (p.$first ? 13 : 16)}px;
  display: flex;
  align-items: center;
  > span:last-child { margin-top: ${p => (p.$first ? 0 : -2)}px; }
`;
const AlgoIcon = styled.span<{ $narrow?: boolean }>`
  width: 16px;
  margin-right: ${p => (p.$narrow ? 3 : 6)}px;
`;
const Ellipsis = styled.span`
  vertical-align: 3px;
  line-height: 1px;
`;
const Combo = styled.div<{ $h: number }>`
  flex: 1;
  height: ${p => p.$h}px;
  display: flex;
  align-items: center;
  border: 1px solid #aaa;
  border-radius: 2px;
  background: linear-gradient(#fdfdfd, #e8e8e8);
  padding-left: 4px;
`;
const ComboArrow = styled.span`
  margin-left: auto;
  width: 16px;
  height: 100%;
  display: flex;
  align-items: center;
  justify-content: center;
  border-left: 1px solid #aaa;
  background: #f5f5f5;
`;
const ComboWrap = styled.div`
  height: 20px;
  margin-bottom: 25px;
  flex: none;
  display: flex;
`;

/* ---------- status bar, laid over the bottom margin of the docks ---------- */
const StatusBar = styled.footer`
  position: absolute;
  left: 0;
  right: 0;
  bottom: 0;
  height: 24px;
  display: flex;
  align-items: flex-start;
  justify-content: flex-end;
  gap: 3px;
  padding: 1px 0 0;
`;
const Cell = styled.div<{ $w: number; $field?: boolean; $dim?: boolean }>`
  width: ${p => p.$w}px;
  height: 22px;
  padding-bottom: ${p => (p.$field ? 1 : 2)}px;
  display: flex;
  align-items: center;
  justify-content: center;
  gap: 5px;
  border: 1px solid #8f8f8f;
  color: ${p => (p.$dim ? '#8a8a8a' : '#000')};
  background: ${p => (p.$field ? '#fff' : '#efefef')};
  box-shadow: inset 0 0 0 1px #f5f5f5${p => (p.$field ? ', inset 0 0 0 2px #bbb' : '')};
`;
const ScaleText = styled.span`
  margin: 0 0 0 6px;
`;
const Orb = styled.div`
  width: 26px;
  height: 26px;
  margin: 17px 0 0 14px;
  flex: none;
  border: 1px solid #2f5b84;
  border-radius: 50%;
  background: #b6cbdf;
`;
const OrbRow = styled.div`
  flex: 1;
  height: 24px;
  overflow: hidden;
`;

/* ---------- popups ---------- */
const Popup = styled.div<{ $x: number; $y: number; $w: number }>`
  position: absolute;
  left: ${p => p.$x}px;
  top: ${p => p.$y}px;
  width: ${p => p.$w}px;
  padding: 0;
  border: 1px solid #808080;
  background: #f7f7f7;
  box-shadow: 3px 3px 3px rgba(0, 0, 0, 0.5);
`;
const Item = styled.div<{ $h: number; $on?: boolean; $gap: number }>`
  height: ${p => p.$h}px;
  display: flex;
  align-items: center;
  gap: ${p => p.$gap}px;
  padding: 0 9px 2px 2px;
  ${p => p.$on && css`color: #fff; background: linear-gradient(#41a0ff, #2d88e4);`}
`;
const IconCell = styled.span`
  width: 16px;
  flex: none;
`;
const Right = styled.i`
  margin-left: auto;
  border: 4px solid transparent;
  border-left: 4px solid currentColor;
  border-right: 0;
`;
const ImeBar = styled.div`
  position: absolute;
  left: 1746px;
  top: 1076px;
  width: 145px;
  height: 26px;
  display: flex;
  align-items: center;
  padding: 1px 5px 1px 4px;
  border-top: 1px solid #111;
  background: linear-gradient(#8d8d8d, #4a4a4a 40%, #161616 42%, #101010);
  color: #fff;
`;
const ImeGrip = styled.i`
  width: 9px;
  height: 17px;
  margin-right: 10px;
  background-image: radial-gradient(circle at 1px 1px, #000 0.8px, #666 1px, transparent 1.300px);
  background-size: 3px 4px;
`;
const ImeMode = styled.b`
  width: 12px;
  font: bold 16px/20px "Liberation Serif", serif;
`;
const ImeKeys = styled.div`
  flex: 1;
  margin-left: 5px;
  font: 7.5px/12px "DejaVu Sans Mono", monospace;
  div { display: flex; align-items: center; justify-content: space-between; }
`;
const Minim = styled.i`
  width: 5px;
  height: 2px;
  margin-top: 4px;
  background: #fff;
`;

const menus: [string, string | undefined, number][] = [
  ['プロジェクト', 'J', 66], ['編集', 'E', 38], ['ビュー', 'V', 42], ['レイヤ', 'L', 40], ['設定', 'S', 38], ['プラグイン', 'P', 59],
  ['ベクタ', 'O', 41], ['ラスタ', 'R', 41], ['データベース', 'D', 72], ['プロセッシング', undefined, 63], ['ヘルプ', 'H', 45],
];
type Tool = [string, number];
const fileTools: Tool[] = [
  ['grip', 6], ['file', 36], ['folder', 33], ['save', 38], ['saveas', 32], ['composer', 38], ['manager', 32], ['grip', 22],
  ['touch', 24], ['pressed', 45], ['pansel', 24], ['zoomin', 46], ['', 174], ['zoomlast', 34], ['zoomnext', 26], ['refresh', 44],
  ['grip', 12], ['identify', 30], ['action', 40], ['downgray', 5], ['select', 44], ['down', 2], ['deselect', 48], ['epsilon', 22],
  ['table', 46], ['abacus', 24], ['ruler', 46], ['down', 0], ['bubble', 48], ['newmark', 25], ['showmark', 41], ['annot', 32],
  ['down', 11], ['grip', 24], ['help', 18], ['whats', 53],
];
const editTools: Tool[] = [
  ['grip', 6], ['pencils', 36], ['pencil', 32], ['saveedit', 40], ['addfeat', 32], ['movefeat', 38], ['node', 32], ['delsel', 38],
  ['cut', 30], ['copy', 38], ['paste', 34], ['grip', 24], ['', 171], ['label', 20], ['abc', 52], ['grip', 14], ['grip', 16],
];
const AbcTag = styled.span`
  width: 21px;
  height: 16px;
  border: 1px solid #999;
  border-radius: 5px 0 0 0;
  color: #888;
  font: 9px/13px "DejaVu Sans", sans-serif;
  text-align: center;
`;
const WithMenu = styled.span`
  display: flex;
  align-items: flex-end;
  margin-right: -6px;
  i { margin-left: -2px; margin-bottom: -1px; }
`;
const renderTool = (name: string) => {
  if (name === 'grip') return <Grip />;
  if (name === 'down') return <Down />;
  if (name === 'downgray') return <Down $c="#999" />;
  if (name === 'abc') return <AbcTag>abc</AbcTag>;
  if (name === 'pencils') return <WithMenu>{icons.pencils}<Down $c="#888" $s={3} /></WithMenu>;
  if (name === 'pressed') return <Pressed>{icons.hand}</Pressed>;
  return icons[name];
};
const Tools = ({ items }: { items: Tool[] }) => (
  <ToolBar>{items.map(([n, w], i) => <Slot key={i} $w={w}>{renderTool(n)}</Slot>)}</ToolBar>
);

const side = ['vector', 'raster', 'elephant', 'feather', 'wing', 'oracle', 'globe', 'globe2', 'globev', 'comma', 'newvec', 'remove'];
const vectorMenu: [string, string, string, number, number][] = [
  ['', 'OpenStreetMap', 'O', 93, 18], ['scope', '解析ツール', 'A', 69, 20], ['survey', '調査ツール', 'R', 69, 20],
  ['gear', '空間演算ツール', 'G', 93, 20], ['geom', 'ジオメトリツール', 'G', 87, 20], ['data', 'データマネジメントツール', 'D', 127, 20],
];
const geoMenu: [string, string, number][] = [
  ['hull', '凸包', 24], ['buffer', 'バッファ', 47], ['intersect', '交差', 24], ['union', '統合', 24], ['sym', '対称差分', 48],
  ['clip', 'クリップ', 48], ['diff', '差分', 24], ['dissolve', '融合', 24], ['sliver', '微細ポリゴンの除去', 108],
];
const algos: [string, string, number, boolean?][] = [
  ['gdal', 'GDAL/OGR [32 geoalgorithms]', 159], ['db', 'GeoServer/PostGIS tools [8 geoalgor', 201, true],
  ['grass', 'GRASS commands [157 geoalgorithms]', 200], ['models', 'Models [4 geoalgorithms]', 128],
  ['orfeo', 'Orfeo Toolbox (Image analysis) [76 g', 201, true], ['qgis', 'QGIS geoalgorithms [67 geoalgorithms]', 199],
  ['r', 'R scripts [22 geoalgorithms]', 145], ['saga', 'SAGA [243 geoalgorithms]', 136], ['script', 'Scripts [10 geoalgorithms]', 135],
];

/* buffered outline: arcs of the buffer radius joined by straight edges */
const BLOB = [
  'M966.800 411.200A184 184 0 0 1 1190.600 456.200L1215.400 490.700',
  'A182 182 0 0 1 1277.500 657.400L1272 686A182 182 0 0 1 1176 805.500',
  'L1075 853Q1063 859 1050 862.600L1007.500 871.700A182 182 0 0 1 855.800 838.200',
  'A182 182 0 0 1 773 722L759.600 657.400A181 181 0 0 1 895.700 448.100Z',
].join('');

export default function App() {
  return (
    <Window>
      <Global />
      <TitleBar>
        <svg width="15" height="16" fill="none"><path d="M3 6C2 2 6 1 9 2s3 5 0 7-6 3-6 1M5 13c4 1 8-1 8-4" stroke="#dfe05a" strokeWidth="3.500" /><path d="M5 14L12 1l-2 5" stroke="#2c7232" strokeWidth="1.800" /></svg>
        <TitleText><Fit w={112}>QGIS2.4.0-Chugiak</Fit></TitleText>
        <WinButton><svg width="12" height="6"><rect x=".5" y="2" width="11" height="3.500" fill="#fff" stroke="#52617a" /></svg></WinButton>
        <WinButton><svg width="13" height="12" fill="#fff" stroke="#4d5c77"><path d="M4.500.500h8v6h-8zM.5 4.500h7v6.500h-7z" /><path d="M3 7h2v2H3z" fill="#8aa" /></svg></WinButton>
        <WinButton $close><svg width="12" height="10"><path d="M2 1l8 8M10 1l-8 8" stroke="#564058" strokeWidth="4" /><path d="M2 1l8 8M10 1l-8 8" stroke="#fff" strokeWidth="2.200" /></svg></WinButton>
      </TitleBar>
      <MenuBar>
        {menus.map(([t, k, w], i) => <MenuTitle key={t} $open={i === 6}><Fit w={w}><Accel text={t} k={k} /></Fit></MenuTitle>)}
      </MenuBar>
      <Tools items={fileTools} />
      <Tools items={editTools} />
      <Body>
        <SideTools>
          <HGrip $w={42} />
          {side.map(n => <SideSlot key={n} $menu={n === 'newvec'}>{icons[n]}{n === 'newvec' && <Down />}</SideSlot>)}
          <SideEnd><HGrip as="div" $w={42} /></SideEnd>
        </SideTools>
        <Dock $w={294}>
          <DockTitle $gap={8}><HGrip /><Fit w={23}>レイヤ</Fit><HGrip /><DockButtons /></DockTitle>
          <LayerTree>
            <LayerRow>
              <Expander /><Stub $w={10} /><CheckMark />
              <svg width="22" height="14"><path d="M7 3c3-3 6 2 9-1h6l-1 8c-4 2-5-2-8-1-2 0-3 3-7 2z" fill="#9cc0ea" stroke="#6d9dd0" /></svg>
              <LayerName><Fit w={26}><u>area</u></Fit></LayerName>
            </LayerRow>
            <Legend><Elbow /><Swatch /></Legend>
          </LayerTree>
          <Tabs>
            <Tab $w={52} $on><Fit w={26}>レイヤ</Fit></Tab>
            <Tab $w={59}><Fit w={36}>ブラウザ</Fit></Tab>
          </Tabs>
        </Dock>
        <Splitter><VGrip /></Splitter>
        <Canvas>
          <svg width="1302" height="1019" viewBox="354 124 1302 1019"><path d={BLOB} fill="#00ff80" stroke="#111" strokeWidth="1" /></svg>
        </Canvas>
        <Splitter><VGrip /></Splitter>
        <Dock $w={256}>
          <DockTitle $gap={11}><HGrip /><Fit w={113}>プロセッシングツールボックス</Fit><HGrip /><DockButtons /></DockTitle>
          <Search>検索...</Search>
          <AlgoTree>
            <AlgoRow $first><Expander $plus /><Stub $w={9} /><Fit w={121}>最近使用したアルゴリズム</Fit></AlgoRow>
            {algos.map(([ic, t, w, cut]) => (
              <AlgoRow key={ic}>
                <Expander $plus /><Stub $w={9} /><AlgoIcon $narrow={ic === 'grass'}>{treeIcons[ic]}</AlgoIcon>
                <Fit w={w}>{t}{cut && <Ellipsis>…</Ellipsis>}</Fit>
              </AlgoRow>
            ))}
          </AlgoTree>
          <ComboWrap><Combo $h={20}><Fit w={98}>Advanced interface</Fit><ComboArrow><Down /></ComboArrow></Combo></ComboWrap>
        </Dock>
      </Body>

      <StatusBar>
        <OrbRow><Orb /></OrbRow>
        <Cell $w={23}><svg width="18" height="18" fill="none" stroke="#222" strokeWidth="1.500"><ellipse cx="6" cy="6" rx="3" ry="5" transform="rotate(-35 6 6)" fill="#bbb" /><path d="M3 3l9 11M9 2l-7 5M12 5l4-3" /><ellipse cx="10.500" cy="12.500" rx="5" ry="3.500" fill="#ddd" /><circle cx="11" cy="13" r="1" /></svg></Cell>
        <Cell $w={35}><Fit w={26}>座標:</Fit></Cell>
        <Cell $w={302} $field><Fit w={79}>547194,4358793</Fit></Cell>
        <Cell $w={34}><Fit w={24}>縮尺</Fit></Cell>
        <Cell $w={85} $field><ScaleText><Fit w={38}>1:20,843</Fit></ScaleText><ComboArrow><Down /></ComboArrow></Cell>
        <Cell $w={23}><svg width="18" height="18" fill="none"><path d="M17 2l-7 8-4 6c4 1 7 0 7-4l4-8z" fill="#888" stroke="#777" /><circle cx="6.500" cy="6" r="4.500" stroke="#d7474b" strokeWidth="2" /><path d="M3.500 3l6 6" stroke="#d7474b" strokeWidth="1.500" /></svg></Cell>
        <Cell $w={55}><CheckMark /><Fit w={26}>レンダ</Fit></Cell>
        <Cell $w={65} $dim><Fit w={55}>EPSG:3100</Fit></Cell>
        <Cell $w={22}><svg width="18" height="18" fill="none"><circle cx="9" cy="9" r="6.500" stroke="#888" strokeWidth="3" /><path d="M9 1v16M1 9h16" stroke="#777" strokeWidth="1.500" /><circle cx="9" cy="9" r="3.500" fill="#ccc" /></svg></Cell>
      </StatusBar>

      <ImeBar>
        <ImeGrip /><ImeMode><Fit w={9}>A</Fit></ImeMode>
        <svg width="66" height="18" viewBox="0 0 66 18" fill="none">
          <path d="M8 6l9 9" stroke="#a9cdf0" strokeWidth="4" /><path d="M5 2c-2 5 2 8 6 6 1-3 0-5-2-6v4L6 5z" fill="#a9cdf0" />
          <circle cx="33" cy="8" r="7" fill="#1679d8" /><circle cx="40" cy="11" r="2.300" fill="#d33" /><circle cx="37" cy="15" r="2.300" fill="#f3c22b" />
          <circle cx="57" cy="9" r="7.300" fill="#1a2bbb" stroke="#c5cbe8" /><path d="M54.500 7c0-4 5.500-3.500 5.500-.5 0 2-3 2-3 4M57 12v2" stroke="#fff" strokeWidth="1.700" />
        </svg>
        <ImeKeys><div><Fit w={20}>CAPS</Fit><Minim /></div><div><Fit w={20}>KANA</Fit><Down $c="#fff" $s={3} /></div></ImeKeys>
      </ImeBar>

      <Popup $x={381} $y={41} $w={185}>
        {vectorMenu.map(([ic, t, k, w, h]) => (
          <Item key={t} $h={h} $gap={6} $on={ic === 'gear'}><IconCell>{menuIcons[ic]}</IconCell><Fit w={w}><Accel text={t} k={k} /></Fit><Right /></Item>
        ))}
      </Popup>
      <Popup $x={565} $y={100} $w={155}>
        {geoMenu.map(([ic, t, w]) => (
          <Item key={t} $h={26} $gap={7} $on={ic === 'buffer'}><IconCell>{menuIcons[ic]}</IconCell><Fit w={w}>{t}</Fit></Item>
        ))}
      </Popup>
    </Window>
  );
}
